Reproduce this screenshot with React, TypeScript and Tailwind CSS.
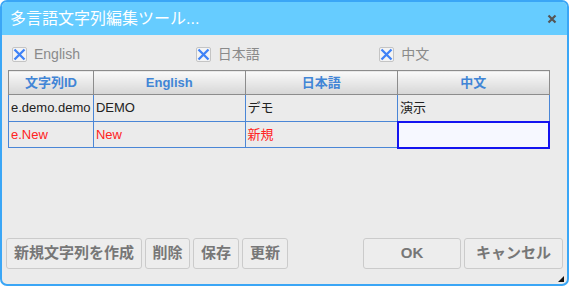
import React from "react";

const font = { fontFamily: '"Liberation Sans", "Noto Sans CJK JP", sans-serif' };

function Check({ label }: { label: string }) {
  return (
    <div className="flex w-[186px] items-center gap-[7px]">
      <span className="flex h-[15px] w-[15px] items-center justify-center rounded-[2px] border border-[#c4c4c4] bg-[#f4f4f4]">
        <svg width="13" height="13" viewBox="0 0 13 13">
          <path d="M1.5 1.5 L11.5 11.5 M11.5 1.5 L1.5 11.5" stroke="#3f82f7" strokeWidth="2.3" />
        </svg>
      </span>
      <span className="text-[14px] text-[#8a8a8a]">{label}</span>
    </div>
  );
}

function Btn({ children, w }: { children: React.ReactNode; w: string }) {
  return (
    <button
      className={`flex h-[31px] ${w} items-center justify-center rounded-[3px] border border-[#cbcbcb] bg-[#ededed] text-[15px] font-bold text-[#777]`}
    >
      {children}
    </button>
  );
}

export default function App() {
  const head = ["文字列ID", "English", "日本語", "中文"];
  const widths = ["w-[85px]", "w-[152px]", "w-[153px]", "w-[152px]"];
  return (
    <div className="h-[287px] w-[571px] bg-white" style={font}>
      <div className="flex h-[286px] w-[569px] flex-col overflow-hidden rounded-[7px] border-2 border-[#3aa6f6] bg-[#ebebeb]">
        <div className="flex h-[33px] shrink-0 items-center justify-between bg-[#66ccff] pl-[8px] pr-[10px]">
          <span className="text-[16px] text-white">多言語文字列編集ツール...</span>
          <svg width="10" height="10" viewBox="0 0 10 10">
            <path d="M1.5 1.5 L8.5 8.5 M8.5 1.5 L1.5 8.5" stroke="#555" strokeWidth="2.2" />
          </svg>
        </div>
        <div className="flex flex-1 flex-col pl-[6px] pr-[4px]">
          <div className="flex h-[35px] items-center pl-[4px] pt-[3px]">
            <Check label="English" />
            <Check label="日本語" />
            <Check label="中文" />
          </div>
          <table className="w-[542px] border-collapse text-[13px]">
            <thead>
              <tr className="h-[24px]">
                {head.map((h, i) => (
                  <th
                    key={h}
                    className={`${widths[i]} border border-[#8c8c8c] bg-gradient-to-b from-[#fafafa] to-[#d6d6d6] text-center text-[13px] font-bold text-[#4185d6]`}
                  >
                    {h}
                  </th>
                ))}
              </tr>
            </thead>
            <tbody>
              <tr className="h-[27px] text-[#222]">
                <td className="border border-[#4a86d6] px-[2px]">e.demo.demo</td>
                <td className="border border-[#4a86d6] px-[2px]">DEMO</td>
                <td className="border border-[#4a86d6] px-[2px]">デモ</td>
                <td className="border border-[#4a86d6] px-[2px]">演示</td>
              </tr>
              <tr className="h-[26px] text-[#f22]">
                <td className="border border-[#4a86d6] px-[2px]">e.New</td>
                <td className="border border-[#4a86d6] px-[2px]">New</td>
                <td className="border border-[#4a86d6] px-[2px]">新規</td>
                <td className="border-2 border-[#1414f0] bg-[#f6f8ff] px-[2px]"></td>
              </tr>
            </tbody>
          </table>
          <div className="flex-1" />
          <div className="flex items-center gap-[3px] pb-[15px]">
            <div className="-ml-[2px] flex gap-[3px]">
              <Btn w="w-[136px]">新規文字列を作成</Btn>
              <Btn w="w-[45px]">削除</Btn>
              <Btn w="w-[46px]">保存</Btn>
              <Btn w="w-[46px]">更新</Btn>
            </div>
            <div className="flex-1" />
            <Btn w="w-[98px]">OK</Btn>
            <Btn w="w-[99px]">キャンセル</Btn>
          </div>
        </div>
        <div className="relative h-0">
          <svg className="absolute bottom-[2px] right-[3px]" width="6" height="6" viewBox="0 0 6 6">
            <path d="M6 0 L6 6 L0 6 Z" fill="#111" />
          </svg>
        </div>
      </div>
    </div>
  );
}
